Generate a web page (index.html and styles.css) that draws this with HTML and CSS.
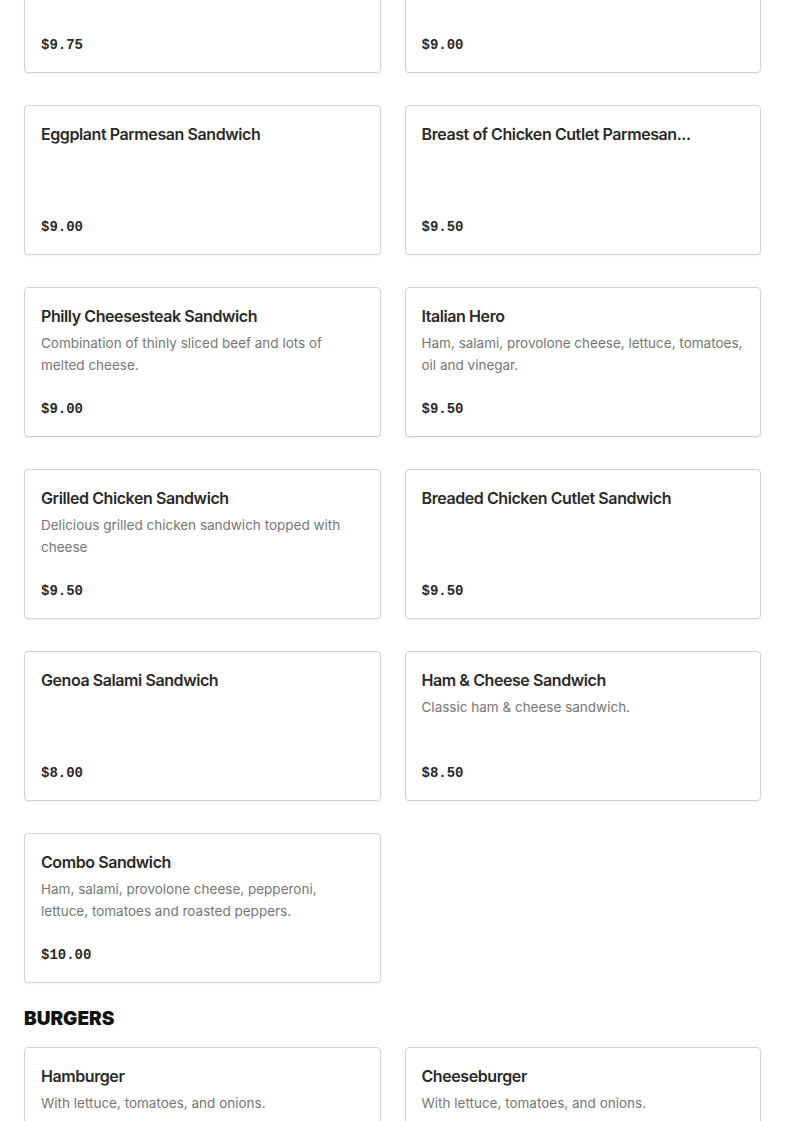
FILE: index.html
```html
<!DOCTYPE html>
<html lang="en">
<head>
<meta charset="utf-8">
<title>Menu</title>
<link rel="stylesheet" href="styles.css">
</head>
<body>
<main class="menu">
  <section class="grid grid-first">
    <div class="card"><div class="price">$9.75</div></div>
    <div class="card"><div class="price">$9.00</div></div>
    <div class="card">
      <h3 class="title">Eggplant Parmesan Sandwich</h3>
      <div class="price">$9.00</div>
    </div>
    <div class="card">
      <h3 class="title">Breast of Chicken Cutlet Parmesan...</h3>
      <div class="price">$9.50</div>
    </div>
    <div class="card">
      <h3 class="title">Philly Cheesesteak Sandwich</h3>
      <p class="desc">Combination of thinly sliced beef and lots of melted cheese.</p>
      <div class="price">$9.00</div>
    </div>
    <div class="card">
      <h3 class="title">Italian Hero</h3>
      <p class="desc">Ham, salami, provolone cheese, lettuce, tomatoes, oil and vinegar.</p>
      <div class="price">$9.50</div>
    </div>
    <div class="card">
      <h3 class="title">Grilled Chicken Sandwich</h3>
      <p class="desc">Delicious grilled chicken sandwich topped with cheese</p>
      <div class="price">$9.50</div>
    </div>
    <div class="card">
      <h3 class="title">Breaded Chicken Cutlet Sandwich</h3>
      <div class="price">$9.50</div>
    </div>
    <div class="card">
      <h3 class="title">Genoa Salami Sandwich</h3>
      <div class="price">$8.00</div>
    </div>
    <div class="card">
      <h3 class="title">Ham &amp; Cheese Sandwich</h3>
      <p class="desc">Classic ham &amp; cheese sandwich.</p>
      <div class="price">$8.50</div>
    </div>
    <div class="card">
      <h3 class="title">Combo Sandwich</h3>
      <p class="desc">Ham, salami, provolone cheese, pepperoni, lettuce, tomatoes and roasted peppers.</p>
      <div class="price">$10.00</div>
    </div>
  </section>

  <h2 class="section-title">BURGERS</h2>
  <section class="grid">
    <div class="card">
      <h3 class="title">Hamburger</h3>
      <p class="desc">With lettuce, tomatoes, and onions.</p>
    </div>
    <div class="card">
      <h3 class="title">Cheeseburger</h3>
      <p class="desc">With lettuce, tomatoes, and onions.</p>
    </div>
  </section>
</main>
</body>
</html>
```

FILE: styles.css
```css
html, body {
  margin: 0;
  padding: 0;
  background: #fff;
}
body {
  font-family: Inter, "Noto Sans", "Liberation Sans", sans-serif;
  color: #2a2a2a;
  overflow: hidden;
}
.menu {
  padding: 0 24px;
}
.grid {
  display: grid;
  grid-template-columns: 1fr 1fr;
  column-gap: 24px;
  row-gap: 32px;
}
.grid-first {
  margin-top: -77px;
}
.card {
  box-sizing: border-box;
  min-height: 150px;
  border: 1px solid #d3d3d3;
  border-radius: 4px;
  padding: 16px 16px 15px 16px;
  display: flex;
  flex-direction: column;
  background: #fff;
  box-shadow: 0 1px 2px rgba(0,0,0,0.06);
}
.title {
  margin: 0;
  font-size: 16px;
  line-height: 24px;
  font-weight: 600;
  color: #2a2a2a;
  letter-spacing: -0.42px;
}
.desc {
  margin: 4px 0 0;
  font-size: 13.5px;
  line-height: 22px;
  color: #767676;
}
.price {
  margin-top: auto;
  padding-top: 12px;
  font-family: "Liberation Mono", "DejaVu Sans Mono", monospace;
  font-weight: 700;
  font-size: 14px;
  line-height: 24px;
  color: #2a2a2a;
}
.section-title {
  margin: 24px 0 16px;
  font-size: 19px;
  line-height: 24px;
  font-weight: 900;
  color: #111;
  letter-spacing: 0;
}
```
